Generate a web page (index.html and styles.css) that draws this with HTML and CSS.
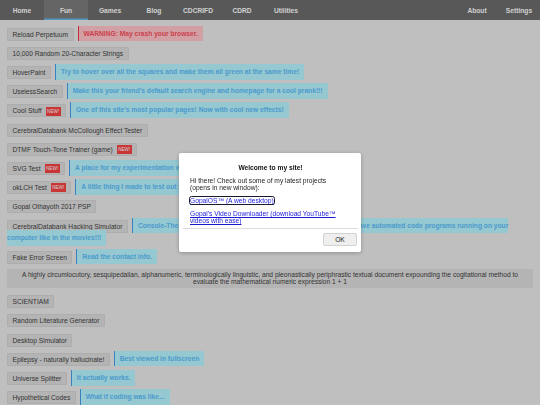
FILE: index.html
```html
<!DOCTYPE html>
<html lang="en">
<head>
<meta charset="utf-8">
<title>Fun</title>
<link rel="stylesheet" href="styles.css">
</head>
<body class="modal-open">
<nav class="topnav">
  <div class="tabs">
    <a class="tab" href="#">Home</a>
    <a class="tab active" href="#">Fun</a>
    <a class="tab" href="#">Games</a>
    <a class="tab" href="#">Blog</a>
    <a class="tab" href="#">CDCRIFD</a>
    <a class="tab" href="#">CDRD</a>
    <a class="tab" href="#">Utilities</a>
  </div>
  <div class="tabs tabs-right">
    <a class="tab" href="#">About</a>
    <a class="tab" href="#">Settings</a>
  </div>
</nav>

<main class="list">
  <div class="row"><button class="btn">Reload Perpetuum</button><span class="note warn">WARNING: May crash your browser.</span></div>
  <div class="row"><button class="btn">10,000 Random 20-Character Strings</button></div>
  <div class="row"><button class="btn">HoverPaint</button><span class="note info">Try to hover over all the squares and make them all green at the same time!</span></div>
  <div class="row"><button class="btn">UselessSearch</button><span class="note info">Make this your friend's default search engine and homepage for a cool prank!!!</span></div>
  <div class="row"><button class="btn">Cool Stuff<span class="new">NEW!</span></button><span class="note info">One of this site's most popular pages! Now with cool new effects!</span></div>
  <div class="row"><button class="btn">CerebralDatabank McCollough Effect Tester</button></div>
  <div class="row"><button class="btn">DTMF Touch-Tone Trainer (game)<span class="new">NEW!</span></button></div>
  <div class="row"><button class="btn">SVG Test<span class="new">NEW!</span></button><span class="note info">A place for my experimentation with SVG.</span></div>
  <div class="row"><button class="btn">okLCH Test<span class="new">NEW!</span></button><span class="note info">A little thing I made to test out the okLCH color space.</span></div>
  <div class="row"><button class="btn">Gopal Othayoth 2017 PSP</button></div>
  <div class="row"><button class="btn">CerebralDatabank Hacking Simulator</button><span class="note info">Console-Themed Hacking Simulator... Watch the screens fill up, and have automated code programs running on your computer like in the movies!!!</span></div>
  <div class="row"><button class="btn">Fake Error Screen</button><span class="note info">Read the contact info.</span></div>
  <p class="essay">A highly circumlocutory, sesquipedalian, alphanumeric, terminologically linguistic, and pleonastically periphrastic textual document expounding the cogitational method to evaluate the mathematical numeric expression 1 + 1</p>
  <div class="row"><button class="btn">SCIENTIAM</button></div>
  <div class="row"><button class="btn">Random Literature Generator</button></div>
  <div class="row"><button class="btn">Desktop Simulator</button></div>
  <div class="row"><button class="btn">Epilepsy - naturally hallucinate!</button><span class="note info">Best viewed in fullscreen</span></div>
  <div class="row"><button class="btn">Universe Splitter</button><span class="note info">It actually works.</span></div>
  <div class="row"><button class="btn">Hypothetical Codes</button><span class="note info">What if coding was like...</span></div>
</main>

<div class="backdrop"></div>

<div class="dialog" role="dialog">
  <div class="dialog-body">
    <h1 class="dialog-title">Welcome to my site!</h1>
    <p class="dialog-text">Hi there! Check out some of my latest projects<br>(opens in new window):</p>
    <p class="dialog-link"><a class="focused" href="#">GopalOS™ (A web desktop)</a></p>
    <p class="dialog-link"><a href="#">Gopal's Video Downloader (download YouTube™ videos with ease)</a></p>
  </div>
  <div class="dialog-foot">
    <button class="ok">OK</button>
  </div>
</div>
</body>
</html>
```

FILE: styles.css
```css
html, body {
  margin: 0;
  padding: 0;
}

body {
  background: #e9e9e9;
  font-family: "Liberation Sans", Arial, sans-serif;
  font-size: 6.67px;
  color: #3e3e3e;
}

body.modal-open {
  height: 100vh;
  overflow: hidden;
}

/* navigation */
.topnav {
  display: flex;
  justify-content: space-between;
  height: 20px;
  background: #6c6c6c;
}

.tabs {
  display: flex;
}

.tab {
  width: 44px;
  display: flex;
  align-items: center;
  justify-content: center;
  color: #fcfcfc;
  font-weight: bold;
  text-decoration: none;
  box-sizing: border-box;
}

.tabs-right .tab {
  width: 42px;
}

.tab.active {
  background: #7c7c7c;
  box-shadow: inset 0 -1.5px 0 #62b7e8;
}

/* list of projects */
.list {
  display: block;
  padding: 7.7px 7px 0;
}

.row {
  line-height: 12px;
  margin-bottom: 6.2px;
}

.btn {
  display: inline-block;
  vertical-align: middle;
  height: 13px;
  box-sizing: border-box;
  margin: 0;
  padding: 0 4.5px;
  border: 1px solid #d3d3d3;
  border-radius: 1px;
  background: #dcdcdc;
  color: #3e3e3e;
  font: inherit;
  line-height: 11px;
}

.new {
  display: inline-block;
  vertical-align: middle;
  margin: -1px 0 0 4px;
  padding: 0 1.5px;
  height: 9px;
  line-height: 9px;
  font-size: 4.6px;
  background: #f44343;
  color: #ffffff;
}

.note {
  margin-left: 4px;
  padding: 4.3px 5px;
  font-weight: bold;
  border-left: 1.5px solid;
}

.note.info {
  background: #b7f4ff;
  color: #5bbdfa;
  border-color: #499ee8;
}

.note.warn {
  background: #ffc3c9;
  color: #fa4f5b;
  border-color: #e83743;
}

.essay {
  margin: -1px 0 7.7px;
  padding: 2px 8px 2.6px;
  background: #dcdcdc;
  text-align: center;
  color: #3e3e3e;
}

/* modal */
.backdrop {
  position: fixed;
  inset: 0;
  background: rgba(0, 0, 0, 0.18);
}

.dialog {
  position: fixed;
  left: 179px;
  top: 153px;
  width: 182px;
  height: 99px;
  display: flex;
  flex-direction: column;
  background: #ffffff;
  border-radius: 2px;
  box-shadow: 0 1px 4px rgba(0, 0, 0, 0.25);
  color: #1e1e1e;
}

.dialog-body {
  height: 76px;
  box-sizing: border-box;
  margin: 0 3px 0 4px;
  padding: 11px 7px 0;
  border-bottom: 1px solid #dddddd;
  overflow: hidden;
}

.dialog-title {
  margin: 0;
  font-size: 6.67px;
  font-weight: bold;
  text-align: center;
  color: #111;
}

.dialog-text,
.dialog-link {
  margin: 6px 0 0;
}

.dialog-link a {
  color: #1a1ad6;
}

.dialog-link a.focused {
  outline: 1px solid #1a1a2a;
  border-radius: 1.5px;
}

.dialog-foot {
  display: flex;
  justify-content: flex-end;
  padding: 4px 4px 0;
}

.ok {
  width: 34px;
  height: 13px;
  margin: 0;
  padding: 0;
  border: 1px solid #d2d2d2;
  border-radius: 2px;
  background: #efefef;
  font-family: inherit;
  font-size: 6.67px;
  color: #222;
}
```
